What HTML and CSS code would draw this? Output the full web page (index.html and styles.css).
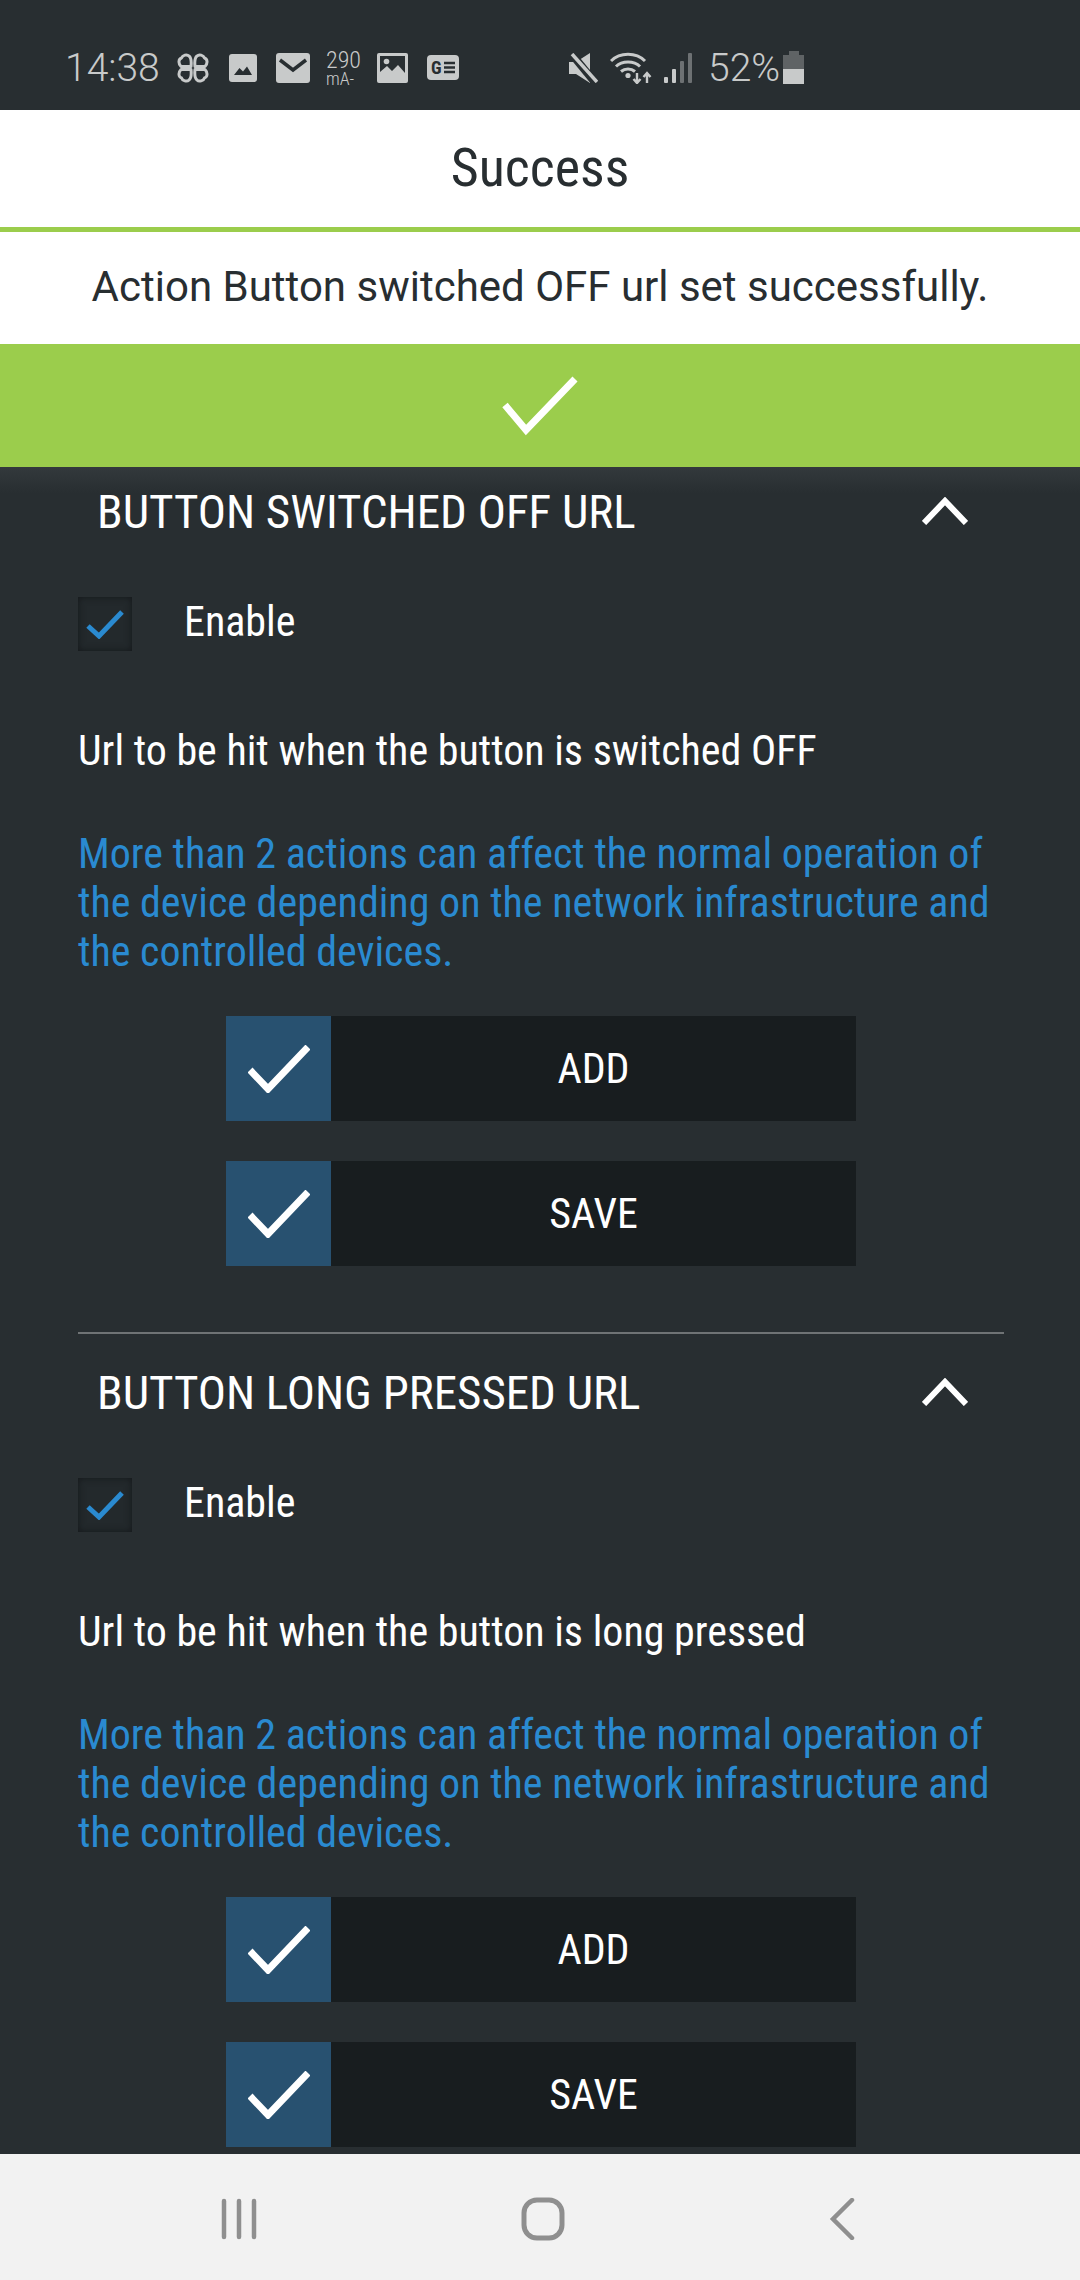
FILE: index.html
```html
<!DOCTYPE html>
<html>
<head>
<meta charset="utf-8">
<title>Success</title>
<link rel="stylesheet" href="styles.css">
</head>
<body>
<div class="status-bar">
  <span class="clock">14:38</span>
  <svg class="st" width="32" height="30" viewBox="0 0 32 30"><g fill="none" stroke="#c8caca" stroke-width="3" stroke-linejoin="round"><path d="M14 13.500 L4 13.500 C1 10.500 1.500 6 4.500 5 C5.500 2 10 1 12 3 C14.500 5 14.500 9 14 13.500 Z"/><path d="M18 13.500 L28 13.500 C31 10.500 30.500 6 27.500 5 C26.500 2 22 1 20 3 C17.500 5 17.500 9 18 13.500 Z"/><path d="M14 16.500 L4 16.500 C1 19.500 1.500 24 4.500 25 C5.500 28 10 29 12 27 C14.500 25 14.500 21 14 16.500 Z"/><path d="M18 16.500 L28 16.500 C31 19.500 30.500 24 27.500 25 C26.500 28 22 29 20 27 C17.500 25 17.500 21 18 16.500 Z"/></g></svg>
  <svg class="st st-gallery" width="28" height="28" viewBox="0 0 28 28"><rect width="28" height="28" rx="3" fill="#c8caca"/><path d="M5 21 L10.500 14 L14 17.500 L18 12.500 L23 21 Z" fill="#282e31"/></svg>
  <svg class="st st-mail" width="34" height="30" viewBox="0 0 34 30"><rect width="34" height="30" rx="3" fill="#c8caca"/><path d="M4 7 L17 17 L30 7" fill="none" stroke="#282e31" stroke-width="3.500"/></svg>
  <div class="st ma"><span class="ma-num">290</span><span class="ma-unit">mA-</span></div>
  <svg class="st st-photo" width="31" height="30" viewBox="0 0 31 30"><rect width="31" height="30" rx="2" fill="#c8caca"/><rect x="3" y="3" width="25" height="24" fill="#282e31"/><path d="M3 19 L10 13 L15 18 L21 12 L28 20 V27 H3 Z" fill="#c8caca"/><circle cx="9.500" cy="8.500" r="2.800" fill="#c8caca"/></svg>
  <svg class="st st-news" width="32" height="25" viewBox="0 0 32 25"><rect width="32" height="25" rx="4" fill="#c8caca"/><text x="4" y="18.500" class="news-g">G</text><path d="M17 8 H28 M17 12.500 H28 M17 17 H28" stroke="#282e31" stroke-width="2.400"/></svg>
  <div class="status-right">
    <svg class="st" width="29" height="30" viewBox="0 0 29 30"><path d="M0 9 H7 L21 0 V30 L7 21 H0 Z" fill="#c8caca"/><path d="M1 -1 L29 33" stroke="#282e31" stroke-width="8"/><path d="M3 1 L28 29" stroke="#c8caca" stroke-width="3.500"/></svg>
    <svg class="st st-wifi" width="43" height="32" viewBox="0 0 43 32"><g fill="none" stroke="#c8caca" stroke-width="3"><path d="M1 9 C10 0 26 0 35 9"/><path d="M6 14.500 C12 8.500 24 8.500 30 14.500"/><path d="M11 19.500 C15 16 21 16 25 19.500"/></g><circle cx="18" cy="23.500" r="2.600" fill="#c8caca"/><path d="M27 21 V31 M23.500 27 L27 31 L30.500 27 M37 31 V21 M33.500 25 L37 21 L40.500 25" fill="none" stroke="#c8caca" stroke-width="2.400"/></svg>
    <svg class="st st-signal" width="28" height="30" viewBox="0 0 28 30"><rect x="0" y="24" width="4" height="6" rx="1" fill="#c8caca"/><rect x="8" y="16" width="4" height="14" rx="1" fill="#c8caca"/><rect x="16" y="8" width="4" height="22" rx="1" fill="#6d7173"/><rect x="24" y="0" width="4" height="30" rx="1" fill="#6d7173"/></svg>
    <span class="battery-text">52%</span>
    <div class="battery"><div class="battery-cap"></div><div class="battery-empty"></div><div class="battery-fill"></div></div>
  </div>
</div>

<div class="dialog">
  <div class="dialog-title">Success</div>
  <div class="dialog-text">Action Button switched OFF url set successfully.</div>
  <div class="dialog-ok">
    <svg width="78" height="60" viewBox="0 0 78 60"><path d="M4 29 L25 54 L74 3" fill="none" stroke="#fff" stroke-width="7"/></svg>
  </div>
</div>

<div class="content">
  <section class="group">
    <div class="group-head">
      <span>BUTTON SWITCHED OFF URL</span>
      <svg class="chevron" width="46" height="28" viewBox="0 0 46 28"><path d="M2 26 L23 4 L44 26" fill="none" stroke="#fff" stroke-width="6"/></svg>
    </div>
    <div class="enable-row">
      <div class="checkbox"><svg width="38" height="30" viewBox="0 0 38 30"><path d="M2 17 L13 27 L36 3" fill="none" stroke="#2a8ad0" stroke-width="5"/></svg></div>
      <span class="enable-text">Enable</span>
    </div>
    <p class="label">Url to be hit when the button is switched OFF</p>
    <p class="note">More than 2 actions can affect the normal operation of the device depending on the network infrastructure and the controlled devices.</p>
    <div class="btn"><div class="btn-icon"><svg width="62" height="48" viewBox="0 0 62 48"><path d="M2 25 L20 44 L60 2" fill="none" stroke="#fff" stroke-width="7"/></svg></div><div class="btn-text">ADD</div></div>
    <div class="btn"><div class="btn-icon"><svg width="62" height="48" viewBox="0 0 62 48"><path d="M2 25 L20 44 L60 2" fill="none" stroke="#fff" stroke-width="7"/></svg></div><div class="btn-text">SAVE</div></div>
  </section>
  <section class="group group-next">
    <div class="group-head">
      <span>BUTTON LONG PRESSED URL</span>
      <svg class="chevron" width="46" height="28" viewBox="0 0 46 28"><path d="M2 26 L23 4 L44 26" fill="none" stroke="#fff" stroke-width="6"/></svg>
    </div>
    <div class="enable-row">
      <div class="checkbox"><svg width="38" height="30" viewBox="0 0 38 30"><path d="M2 17 L13 27 L36 3" fill="none" stroke="#2a8ad0" stroke-width="5"/></svg></div>
      <span class="enable-text">Enable</span>
    </div>
    <p class="label">Url to be hit when the button is long pressed</p>
    <p class="note">More than 2 actions can affect the normal operation of the device depending on the network infrastructure and the controlled devices.</p>
    <div class="btn"><div class="btn-icon"><svg width="62" height="48" viewBox="0 0 62 48"><path d="M2 25 L20 44 L60 2" fill="none" stroke="#fff" stroke-width="7"/></svg></div><div class="btn-text">ADD</div></div>
    <div class="btn"><div class="btn-icon"><svg width="62" height="48" viewBox="0 0 62 48"><path d="M2 25 L20 44 L60 2" fill="none" stroke="#fff" stroke-width="7"/></svg></div><div class="btn-text">SAVE</div></div>
  </section>
</div>

<div class="nav-bar">
  <svg width="36" height="42" viewBox="0 0 36 42"><path d="M3 3 V39 M18 3 V39 M33 3 V39" fill="none" stroke="#8f8f8f" stroke-width="4.500" stroke-linecap="round"/></svg>
  <svg width="44" height="44" viewBox="0 0 44 44"><rect x="3" y="3" width="38" height="38" rx="13" fill="none" stroke="#8f8f8f" stroke-width="5"/></svg>
  <svg width="26" height="42" viewBox="0 0 26 42"><path d="M23 2 L4 21 L23 40" fill="none" stroke="#8f8f8f" stroke-width="4.500" stroke-linecap="round"/></svg>
</div>
</body>
</html>
```
FILE: styles.css
```css
html, body {
  margin: 0;
  padding: 0;
}

body {
  width: 1080px;
  height: 2280px;
  overflow: hidden;
  display: flex;
  flex-direction: column;
  background: #282e31;
  font-family: Roboto, "Liberation Sans", sans-serif;
  font-stretch: condensed;
  color: #fff;
}

p {
  margin: 0;
}

.status-bar {
  height: 110px;
  flex: none;
  display: flex;
  align-items: center;
  padding: 25px 0 0 65px;
  box-sizing: border-box;
  color: #c8caca;
}

.st {
  flex: none;
}

.clock {
  font-size: 39px;
  font-weight: 300;
  font-stretch: normal;
  width: 112px;
}

.st-gallery { margin-left: 20px; }
.st-mail { margin-left: 19px; }
.st-photo { margin-left: 17px; }
.st-news { margin-left: 19px; }

.ma {
  margin-left: 16px;
  width: 34px;
  display: flex;
  flex-direction: column;
  font-weight: 300;
}

.ma-num {
  font-size: 24px;
  line-height: 21px;
}

.ma-unit {
  font-size: 18px;
  line-height: 15px;
}

.news-g {
  font-size: 18px;
  font-weight: 700;
  fill: #282e31;
}

.status-right {
  margin-left: 110px;
  display: flex;
  align-items: center;
}

.st-wifi { margin-left: 12px; }
.st-signal { margin-left: 11px; }

.battery-text {
  margin-left: 16px;
  font-size: 39px;
  font-weight: 300;
  font-stretch: normal;
  width: 75px;
}

.battery {
  width: 21px;
  display: flex;
  flex-direction: column;
  align-items: center;
}

.battery-cap {
  width: 10px;
  height: 4px;
  background: #5f6365;
}

.battery-empty {
  width: 21px;
  height: 14px;
  background: #5f6365;
}

.battery-fill {
  width: 21px;
  height: 15px;
  background: #c8caca;
}

.dialog {
  flex: none;
  background: #fff;
  color: #282e31;
  text-align: center;
}

.dialog-title {
  height: 117px;
  border-bottom: 5px solid #9bcd4c;
  line-height: 116px;
  font-size: 54px;
}

.dialog-text {
  height: 112px;
  line-height: 110px;
  font-size: 42px;
  font-stretch: normal;
}

.dialog-ok {
  height: 123px;
  background: #9bcd4c;
  display: flex;
  align-items: center;
  justify-content: center;
}

.content {
  flex: 1;
  min-height: 0;
  overflow: hidden;
  padding: 0 76px 0 78px;
  background: linear-gradient(#33393c, #282e31 26px);
}

.group-next {
  margin-top: 66px;
  padding-top: 14px;
  border-top: 2px solid #6f7375;
}

.group-head {
  height: 88px;
  display: flex;
  align-items: center;
  justify-content: space-between;
  padding: 0 36px 0 19px;
  font-size: 47px;
}

.enable-row {
  margin-top: 42px;
  height: 54px;
  display: flex;
  align-items: center;
  gap: 52px;
  font-size: 42px;
}

.enable-text {
  padding-bottom: 6px;
}

.checkbox {
  width: 54px;
  height: 54px;
  background: #23292c;
  box-shadow: inset 0 0 7px #14181a;
  display: flex;
  align-items: center;
  justify-content: center;
}

.label {
  margin-top: 70px;
  font-size: 42px;
  line-height: 60px;
}

.note {
  margin-top: 48px;
  color: #2a8ad0;
  font-size: 42px;
  line-height: 49px;
}

.btn {
  margin: 40px 0 0 148px;
  width: 630px;
  height: 105px;
  display: flex;
  background: #181d1f;
}

.btn-icon {
  width: 105px;
  background: #285170;
  display: flex;
  align-items: center;
  justify-content: center;
}

.btn-text {
  flex: 1;
  text-align: center;
  line-height: 105px;
  font-size: 42px;
}

.nav-bar {
  flex: none;
  height: 126px;
  background: #f2f2f2;
  display: flex;
  align-items: center;
  justify-content: space-between;
  padding: 4px 225px 0 221px;
  box-sizing: border-box;
}
```
